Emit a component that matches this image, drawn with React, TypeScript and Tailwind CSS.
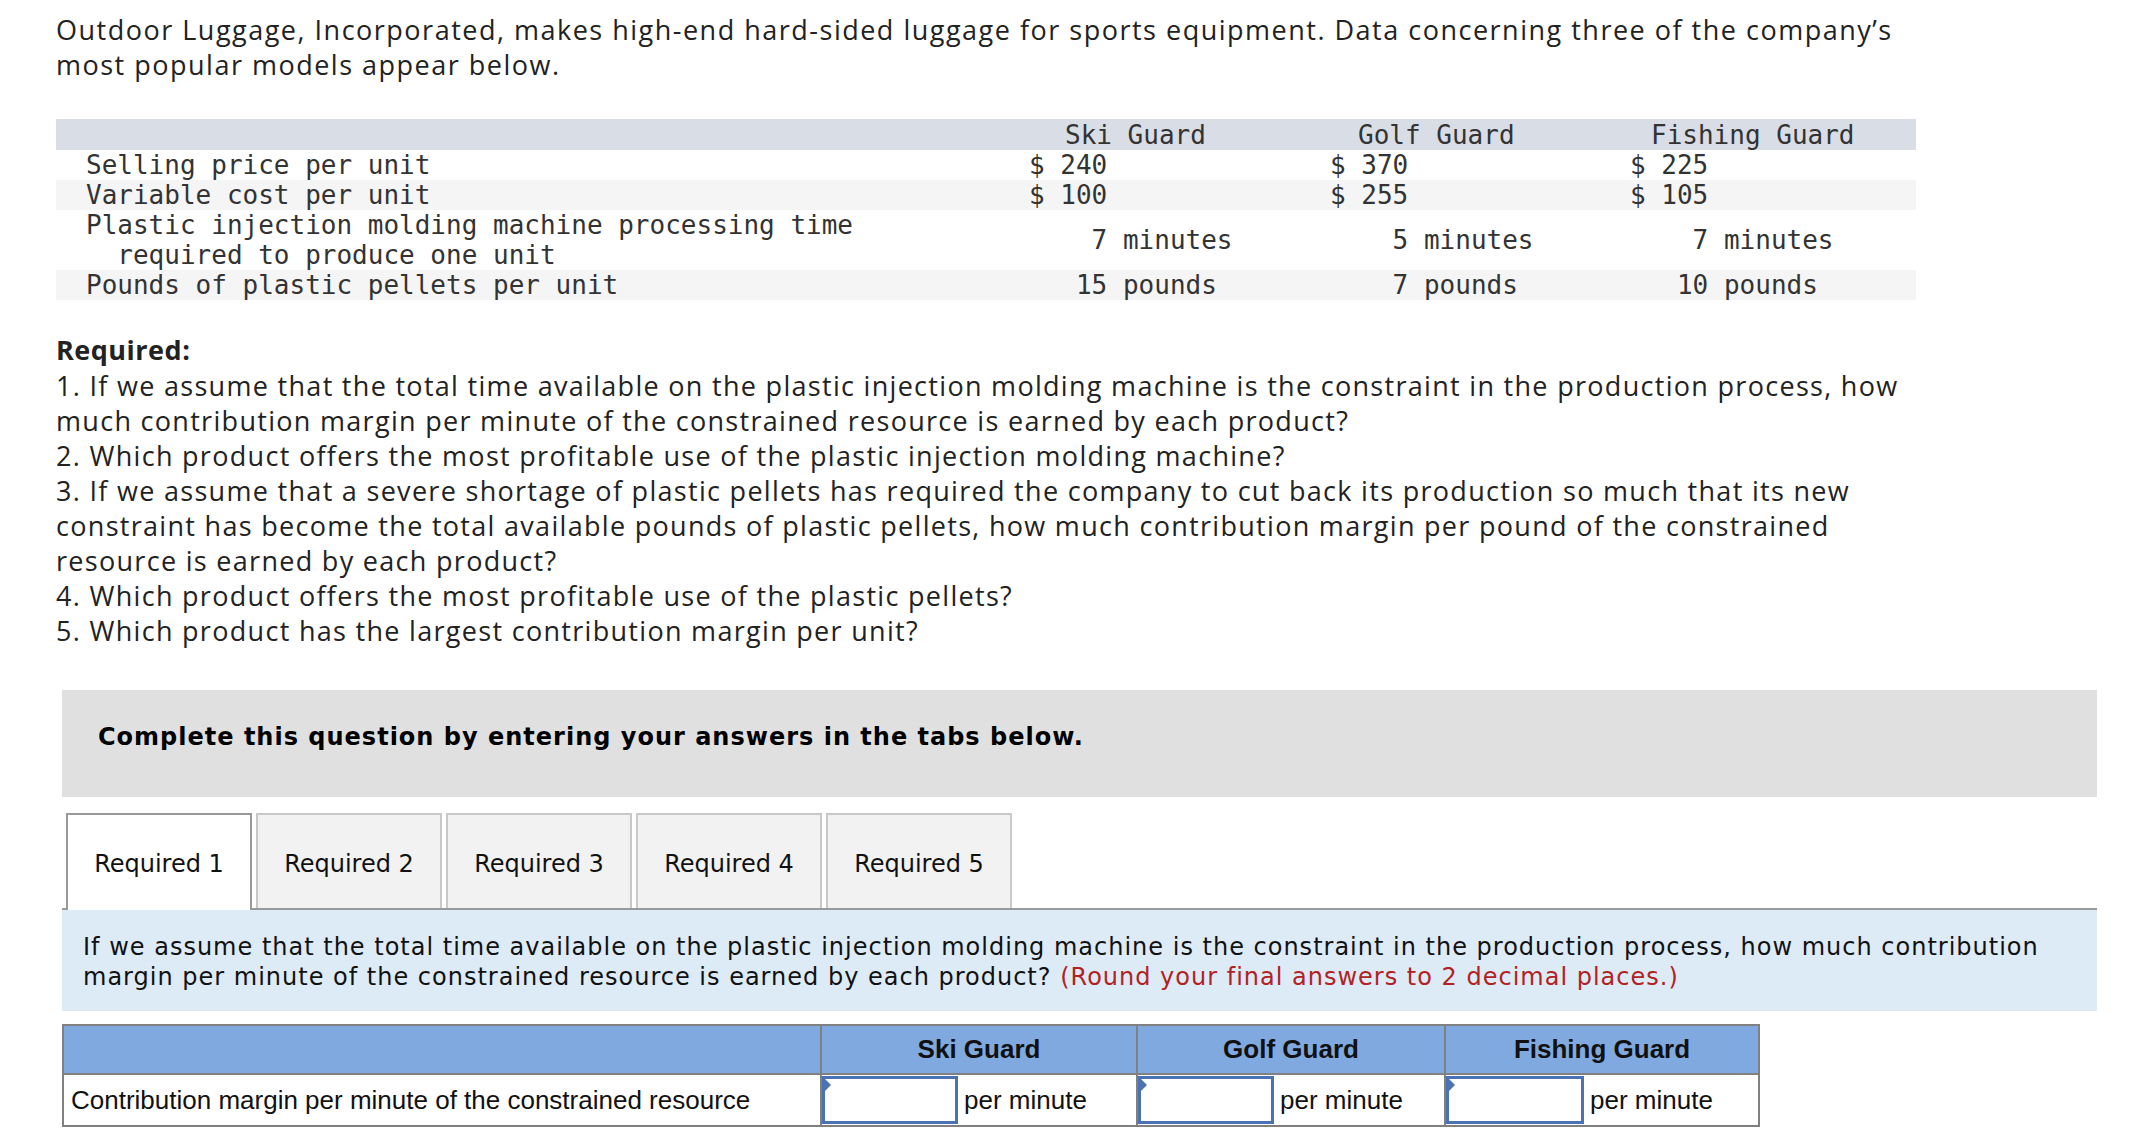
import React from "react";

const sans = "font-['Open_Sans',sans-serif]";
const mono = "font-['DejaVu_Sans_Mono',monospace]";
const verdana = "font-['DejaVu_Sans',sans-serif]";
const arial = "font-['Liberation_Sans',Arial,sans-serif]";

const products = ["Ski Guard", "Golf Guard", "Fishing Guard"];

const AnswerInput = () => (
  <div className="relative h-full border-[3px] border-[#4a72b4] bg-white">
    <div className="absolute left-0 top-0 h-0 w-0 border-y-[6px] border-l-[6px] border-y-transparent border-l-[#4a72b4]" />
  </div>
);

export default function App() {
  return (
    <div className="min-h-[1132px] w-[2146px] bg-white text-[#222]">
      {/* Intro */}
      <div className={`${sans} pl-[56px] pt-[12px] text-[27px] leading-[35px] tracking-[1.5px] text-[#222]`}>
        <p className="whitespace-nowrap">
          Outdoor Luggage, Incorporated, makes high-end hard-sided luggage for sports equipment. Data concerning three of the company’s
          <br />
          most popular models appear below.
        </p>
      </div>

      {/* Data table */}
      <div className={`${mono} ml-[56px] mt-[37px] w-[1860px] text-[26px] leading-[30px] text-[#333]`}>
        <div className="grid h-[31px] grid-cols-[973px_301px_300px_286px] items-center bg-[#d9dde5]">
          <div />
          <div className="pl-[36px]">Ski Guard</div>
          <div className="pl-[28px]">Golf Guard</div>
          <div className="pl-[21px]">Fishing Guard</div>
        </div>
        <div className="grid grid-cols-[973px_301px_300px_286px] whitespace-pre bg-white">
          <div className="pl-[30px]">Selling price per unit</div>
          <div>$ 240</div>
          <div>$ 370</div>
          <div>$ 225</div>
        </div>
        <div className="grid grid-cols-[973px_301px_300px_286px] whitespace-pre bg-[#f5f5f5]">
          <div className="pl-[30px]">Variable cost per unit</div>
          <div>$ 100</div>
          <div>$ 255</div>
          <div>$ 105</div>
        </div>
        <div className="grid grid-cols-[973px_301px_300px_286px] items-center whitespace-pre bg-white">
          <div className="pl-[30px]">
            Plastic injection molding machine processing time
            <br />
            {"  required to produce one unit"}
          </div>
          <div>{"    7 minutes"}</div>
          <div>{"    5 minutes"}</div>
          <div>{"    7 minutes"}</div>
        </div>
        <div className="grid grid-cols-[973px_301px_300px_286px] whitespace-pre bg-[#f5f5f5]">
          <div className="pl-[30px]">Pounds of plastic pellets per unit</div>
          <div>{"   15 pounds"}</div>
          <div>{"    7 pounds"}</div>
          <div>{"   10 pounds"}</div>
        </div>
      </div>

      {/* Required */}
      <div className={`${sans} mt-[31px] whitespace-nowrap pl-[56px] text-[27px] leading-[35px] tracking-[1.3px] text-[#222]`}>
        <p className="font-bold leading-[37px] tracking-[0.5px]">Required:</p>
        <p>
          1. If we assume that the total time available on the plastic injection molding machine is the constraint in the production process, how
          <br />
          much contribution margin per minute of the constrained resource is earned by each product?
        </p>
        <p>2. Which product offers the most profitable use of the plastic injection molding machine?</p>
        <p>
          3. If we assume that a severe shortage of plastic pellets has required the company to cut back its production so much that its new
          <br />
          constraint has become the total available pounds of plastic pellets, how much contribution margin per pound of the constrained
          <br />
          resource is earned by each product?
        </p>
        <p>4. Which product offers the most profitable use of the plastic pellets?</p>
        <p>5. Which product has the largest contribution margin per unit?</p>
      </div>

      {/* Instructions box */}
      <div className="ml-[62px] mt-[42px] flex h-[107px] w-[2035px] items-start bg-[#e0e0e0] pl-[36px] pt-[32px]">
        <p className={`${verdana} text-[24px] font-bold leading-[30px] tracking-[1px] text-black`}>
          Complete this question by entering your answers in the tabs below.
        </p>
      </div>

      {/* Tabs */}
      <div className="ml-[62px] mt-[16px] w-[2035px]">
        <div className={`${verdana} flex h-[95px] items-end pl-[4px] text-[24px] text-[#111]`}>
          <div className="z-10 -mb-[2px] flex h-[97px] w-[186px] items-center justify-center border-x-2 border-t-2 border-[#999] bg-white pt-[2px]">
            Required 1
          </div>
          {["Required 2", "Required 3", "Required 4", "Required 5"].map((t) => (
            <div
              key={t}
              className="ml-[4px] flex h-[95px] w-[186px] items-center justify-center border-x-2 border-t-2 border-[#c8c8c8] bg-[#f2f2f2] pt-[4px]"
            >
              {t}
            </div>
          ))}
        </div>
        <div className="h-[2px] bg-[#999]" />

        {/* Question text */}
        <div className={`${verdana} h-[101px] bg-[#ddebf7] pl-[21px] pt-[22px] text-[24px] leading-[30px] tracking-[1px] text-[#111]`}>
          <p className="whitespace-nowrap">
            If we assume that the total time available on the plastic injection molding machine is the constraint in the production process, how much contribution
            <br />
            margin per minute of the constrained resource is earned by each product?{" "}
            <span className="text-[#b22222]">(Round your final answers to 2 decimal places.)</span>
          </p>
        </div>
      </div>

      {/* Answer table */}
      <div className={`${arial} ml-[62px] mt-[13px] w-[1698px] border-2 border-[#808080] text-[26px] text-[#111]`}>
        <div className="grid h-[47px] grid-cols-[756px_316px_308px_314px] bg-[#80aadf] font-bold">
          <div />
          {products.map((p) => (
            <div key={p} className="flex items-center justify-center border-l-2 border-[#808080]">
              {p}
            </div>
          ))}
        </div>
        <div className="grid h-[52px] grid-cols-[756px_316px_308px_314px] border-t-2 border-[#808080] bg-white">
          <div className="flex items-center pl-[7px]">Contribution margin per minute of the constrained resource</div>
          {[136, 136, 138].map((w, i) => (
            <div key={i} className="flex border-l-2 border-[#808080]">
              <div style={{ width: w }} className="py-[1px]">
                <AnswerInput />
              </div>
              <div className="flex items-center pl-[6px]">per minute</div>
            </div>
          ))}
        </div>
      </div>
    </div>
  );
}
